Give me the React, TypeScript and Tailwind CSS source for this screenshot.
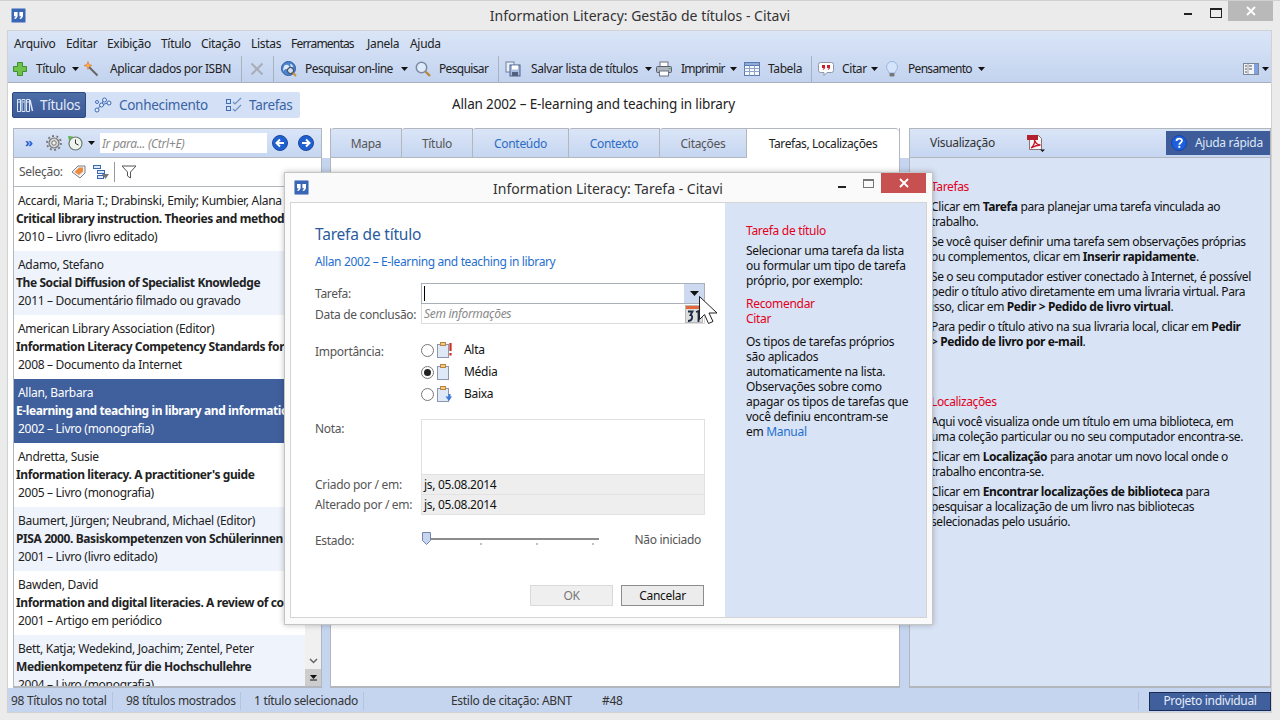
import type { ReactNode } from 'react';

const Caret = ({ className = '' }: { className?: string }) => (
  <svg width="7" height="4" viewBox="0 0 7 4" className={`shrink-0 ${className}`}><path d="M0 0h7L3.5 4z" fill="#111" /></svg>
);

const Logo = () => (
  <svg width="15" height="15" viewBox="0 0 15 15" className="shrink-0">
    <rect x="0.5" y="0.5" width="14" height="14" rx="1" fill="#3a67b5" stroke="#8fa8d4" />
    <path d="M3 4h3.6v3.4C6.6 9.3 5.4 10.6 3.6 11l-.4-1c.9-.3 1.4-.9 1.4-1.8H3zM8.4 4H12v3.4c0 1.9-1.2 3.2-3 3.6l-.4-1c.9-.3 1.4-.9 1.4-1.8H8.4z" fill="#fff" />
  </svg>
);

const Ico = ({ children, w = 16, className = '' }: { children: ReactNode; w?: number; className?: string }) => (
  <svg width={w} height="16" viewBox={`0 0 ${w} 16`} className={`shrink-0 ${className}`}>{children}</svg>
);

const PlusIcon = () => <Ico><path d="M5.5 1.5h5v4h4v5h-4v4h-5v-4h-4v-5h4z" fill="#6cc24a" stroke="#3f8f2a" /></Ico>;
const WandIcon = () => (
  <Ico>
    <path d="M6 6l8.5 8.5" stroke="#666" strokeWidth="2" />
    <path d="M5 0.5l1 3 3 1-3 1-1 3-1-3-3-1 3-1z" fill="#f6b93a" stroke="#e2572b" strokeWidth="0.5" />
  </Ico>
);
const XIcon = () => <Ico><path d="M2.5 2.5l11 11M13.5 2.5l-11 11" stroke="#a9aeb6" strokeWidth="2" /></Ico>;
const GlobeIcon = () => (
  <Ico>
    <circle cx="7.5" cy="7.5" r="7" fill="#4f83cf" stroke="#2e5a9f" />
    <path d="M3 5c2-2 4-1 5 0s-1 3-3 3-2 3-3 1zM9 3c2 0 3 2 3 3l-2 0z" fill="#dbe8f8" />
    <circle cx="9.5" cy="9.5" r="3" fill="#cfe0f5" stroke="#333" />
    <path d="M12 12l3 3" stroke="#c8912e" strokeWidth="2" />
  </Ico>
);
const SearchIcon = () => (
  <Ico>
    <circle cx="6.5" cy="6.5" r="5.2" fill="#dceafa" stroke="#7b8ba0" strokeWidth="1.5" />
    <path d="M10.5 10.5l4.5 4.5" stroke="#b98a3c" strokeWidth="2.4" />
  </Ico>
);
const SaveIcon = () => (
  <Ico>
    <rect x="1" y="1" width="8" height="10" fill="#e8eef8" stroke="#6f7f9c" />
    <rect x="5" y="4" width="10" height="11" fill="#a9bde0" stroke="#4f6189" />
    <rect x="7" y="4.5" width="6" height="4" fill="#fff" />
    <rect x="7" y="11" width="6" height="4" fill="#51607d" />
  </Ico>
);
const PrintIcon = () => (
  <Ico>
    <rect x="4" y="1" width="8" height="5" fill="#fff" stroke="#6c7480" />
    <rect x="0.5" y="5.5" width="15" height="6" rx="1" fill="#aeb6c2" stroke="#59616e" />
    <rect x="3.5" y="10" width="9" height="5" fill="#fff" stroke="#6c7480" />
    <rect x="12.5" y="7" width="2" height="1" fill="#4caf50" />
  </Ico>
);
const TableIcon = () => (
  <Ico>
    <rect x="0.5" y="1.5" width="15" height="13" fill="#f5f8fd" stroke="#5b7bb0" />
    <rect x="0.5" y="1.5" width="15" height="3" fill="#8eaadb" stroke="#5b7bb0" />
    <path d="M5.5 4.5v10M10.5 4.5v10M.5 7.5h15M.5 10.5h15" stroke="#8fa4c8" />
  </Ico>
);
const QuoteIcon = () => (
  <Ico>
    <path d="M2.5 1.5h11a2 2 0 0 1 2 2v6a2 2 0 0 1-2 2H9l-3 3v-3H2.500a2 2 0 0 1-2-2v-6a2 2 0 0 1 2-2z" fill="#fff" stroke="#8d97a8" />
    <path d="M4 4h3v2.500c0 1.200-.8 2-2 2.300l-.3-.8c.6-.2.9-.6.9-1.100H4zM9 4h3v2.500c0 1.200-.8 2-2 2.300l-.3-.8c.6-.2.9-.6.9-1.100H9z" fill="#c8202c" />
  </Ico>
);
const BulbIcon = () => (
  <Ico w={12}>
    <path d="M6 .5a5.500 5.500 0 0 1 5.500 5.500c0 2.500-2 3.500-2.500 6h-6C2.500 9.500.5 8.500.5 6A5.500 5.500 0 0 1 6 .5z" fill="#d4e4fa" stroke="#9db6dc" />
    <rect x="3.500" y="12" width="5" height="3.500" rx="1" fill="#777" />
  </Ico>
);
const ViewIcon = () => (
  <Ico>
    <rect x="0.500" y="2.500" width="15" height="11" fill="#f2f4f8" stroke="#7e8796" />
    <rect x="11" y="3" width="4" height="10" fill="#7fa2dd" />
    <path d="M2 5h2M2 8h2M2 11h2M6 5h3M6 8h3" stroke="#555" />
    <path d="M5 3v10" stroke="#9aa2ae" />
  </Ico>
);
const BooksIcon = () => (
  <Ico w={18}>
    <path d="M1.500 2.500h3v12h-3zM6 2.500h3v12H6zM10.500 2.500h3v12h-3z" fill="none" stroke="#dbe6f8" />
    <path d="M2 5h2M6.500 5h2M11 5h2" stroke="#dbe6f8" />
    <path d="M14 3l2.500 11" stroke="#dbe6f8" strokeWidth="1.500" />
  </Ico>
);
const NodesIcon = () => (
  <Ico w={18}>
    <path d="M3 13l4-5 3-5M7 8l7-2" stroke="#3f6cb5" fill="none" />
    <g fill="#e6eefb" stroke="#3f6cb5"><circle cx="3" cy="13" r="2" /><circle cx="7.500" cy="8" r="2" /><circle cx="10.500" cy="3" r="2" /><circle cx="15" cy="6" r="2" /><circle cx="3" cy="5" r="1.500" /></g>
  </Ico>
);
const TasksIcon = () => (
  <Ico w={18}>
    <g fill="none" stroke="#3f6cb5"><rect x="1.500" y="2.500" width="4" height="4" /><rect x="1.500" y="9.500" width="4" height="4" /></g>
    <path d="M8 5l2 2 6-6M8 12l2 2 6-6" fill="none" stroke="#6f8fc4" strokeWidth="1.200" />
  </Ico>
);
const GearIcon = () => (
  <Ico>
    <circle cx="8" cy="8" r="5" fill="#d6d6d6" stroke="#777" strokeWidth="1.200" />
    <circle cx="8" cy="8" r="7" fill="none" stroke="#777" strokeWidth="1.800" strokeDasharray="2 2.400" />
    <circle cx="8" cy="8" r="2.200" fill="#f4f4f4" stroke="#777" />
  </Ico>
);
const ClockIcon = () => (
  <Ico>
    <circle cx="8.500" cy="8.500" r="6.500" fill="#eef3ee" stroke="#6b7a70" strokeWidth="1.200" />
    <path d="M8.500 4.500v4l3 1.500" fill="none" stroke="#333" />
    <path d="M1 1l5 .5-4 4z" fill="#5db44a" />
  </Ico>
);
const NavBtn = ({ dir }: { dir: 'l' | 'r' }) => (
  <svg width="16" height="16" viewBox="0 0 16 16" className="shrink-0">
    <circle cx="8" cy="8" r="7.500" fill="#1f5fd0" stroke="#1a4a9e" />
    <path d={dir === 'l' ? 'M12 8H5M8 4.500L4.500 8 8 11.500' : 'M4 8h7M8 4.500L11.500 8 8 11.500'} fill="none" stroke="#fff" strokeWidth="2" />
  </svg>
);
const TagIcon = () => (
  <Ico>
    <path d="M1 8l6-6h7v7l-5 5z" fill="#f0f2f6" stroke="#7a7f88" />
    <path d="M3.500 8L8 3.500h4v4L8 11z" fill="#ee8a3c" />
  </Ico>
);
const TreeIcon = () => (
  <Ico>
    <rect x="0.500" y="1.500" width="7" height="3" fill="#dfe9f8" stroke="#3a68ad" />
    <rect x="4.500" y="6.500" width="7" height="3" fill="#dfe9f8" stroke="#3a68ad" />
    <rect x="4.500" y="11.500" width="6" height="3" fill="#dfe9f8" stroke="#3a68ad" />
    <path d="M9 10h7l-3.500 5z" fill="#777" />
  </Ico>
);
const FunnelIcon = () => <Ico><path d="M1 2h14l-5.500 6v6l-3-2V8z" fill="#fff" stroke="#555" /></Ico>;
const PdfIcon = () => (
  <svg width="19" height="19" viewBox="0 0 19 19" className="shrink-0">
    <path d="M3.500 1.500h9l3 3v11h-12z" fill="#f7f7f7" stroke="#8c6f73" />
    <rect x="1" y="1" width="11" height="5" fill="#b22030" />
    <path d="M5 14c3-2 4-6 3.500-8 1 3 3 5 6 5-3 0-6 1-9.500 3z" fill="none" stroke="#c5162a" strokeWidth="1.300" />
    <path d="M14 15.500h5l-2.500 2.500z" fill="#111" />
  </svg>
);
const HelpIcon = () => (
  <svg width="16" height="16" viewBox="0 0 16 16" className="shrink-0">
    <circle cx="8" cy="8" r="7.500" fill="#1d5fdc" stroke="#1747a5" />
    <path d="M5.500 6c0-3.200 5.500-3.200 5.500-.2 0 1.900-2.700 1.900-2.700 3.900" fill="none" stroke="#fff" strokeWidth="1.800" />
    <rect x="7.300" y="10.800" width="2" height="2" fill="#fff" />
  </svg>
);
const NoteIcon = ({ kind }: { kind: 'high' | 'mid' | 'low' }) => (
  <svg width="16" height="16" viewBox="0 0 16 16" className="shrink-0">
    <rect x="0.500" y="2.500" width="11" height="13" fill="#dfe8f7" stroke="#8b97ad" />
    <rect x="3.500" y="0.500" width="5" height="3" fill="#f3c98a" stroke="#b8863e" />
    {kind === 'high' && <path d="M13.500 1v8M13.500 11v2.500" stroke="#d52b1e" strokeWidth="2.200" />}
    {kind === 'low' && <path d="M9.500 9h3V6.500h2V9H16l-3 4.500z" fill="#3b78d8" transform="translate(-1 1.500)" />}
  </svg>
);
const CalendarIcon = () => (
  <svg width="18" height="18" viewBox="0 0 18 18" className="shrink-0">
    <rect x="0.500" y="0.500" width="17" height="17" fill="#dedede" stroke="#b9b9b9" />
    <rect x="1" y="1" width="16" height="3" fill="#e2683c" />
    <path d="M3 6.500h4.500l-2 3.500c2.500 0 2.500 6-2.500 6M11 7l2.500-1v11" fill="none" stroke="#1d2b45" strokeWidth="1.800" />
  </svg>
);

const Sep = () => <div className="w-px h-[26px] bg-[#a8b1bf] shrink-0" />;

function Tool({ icon, label, caret, labelClass, className = '' }: { icon: ReactNode; label: string; caret?: boolean; labelClass: string; className?: string }) {
  return (
    <div className={`flex items-center shrink-0 ${className}`}>
      {icon}
      <span className={`whitespace-nowrap ${labelClass}`}>{label}</span>
      {caret && <Caret className="ml-[5px]" />}
    </div>
  );
}

const menu = [
  ['Arquivo', 'w-[52px]'], ['Editar', 'w-[41px]'], ['Exibição', 'w-[54px]'], ['Título', 'w-[40px]'], ['Citação', 'w-[50px]'],
  ['Listas', 'w-[40px]'], ['Ferramentas', 'w-[76px] tracking-[-0.8px]'], ['Janela', 'w-[43px]'], ['Ajuda', 'w-[36px]'],
];

const rows = [
  ['Accardi, Maria T.; Drabinski, Emily; Kumbier, Alana', 'Critical library instruction. Theories and methods', '2010 – Livro (livro editado)'],
  ['Adamo, Stefano', 'The Social Diffusion of Specialist Knowledge', '2011 – Documentário filmado ou gravado'],
  ['American Library Association (Editor)', 'Information Literacy Competency Standards for', '2008 – Documento da Internet'],
  ['Allan, Barbara', 'E-learning and teaching in library and information', '2002 – Livro (monografia)'],
  ['Andretta, Susie', "Information literacy. A practitioner's guide", '2005 – Livro (monografia)'],
  ['Baumert, Jürgen; Neubrand, Michael (Editor)', 'PISA 2000. Basiskompetenzen von Schülerinnen', '2001 – Livro (livro editado)'],
  ['Bawden, David', 'Information and digital literacies. A review of co', '2001 – Artigo em periódico'],
  ['Bett, Katja; Wedekind, Joachim; Zentel, Peter', 'Medienkompetenz für die Hochschullehre', '2004 – Livro (monografia)'],
];

const rowBg = ['bg-white', 'bg-[#eef3fc]', 'bg-white', 'bg-[#3f5f9d] text-white', 'bg-white', 'bg-[#eef3fc]', 'bg-white', 'bg-[#eef3fc]'];

const tabs = [
  ['Mapa', 'w-[71px] text-[#555]'], ['Título', 'w-[71px] text-[#555]'], ['Conteúdo', 'w-[96px] text-[#2b6cc4]'],
  ['Contexto', 'w-[91px] text-[#2b6cc4]'], ['Citações', 'w-[87px] text-[#555]'],
];

const Red = ({ children }: { children: ReactNode }) => <div className="text-[#e3001b]">{children}</div>;
const P = ({ children }: { children: ReactNode }) => <p className="mt-[5px]">{children}</p>;

const Radio = ({ on, kind, label }: { on?: boolean; kind: 'high' | 'mid' | 'low'; label: string }) => (
  <div className="flex items-center h-[22px]">
    <div className="w-[13px] h-[13px] rounded-full border border-[#777] bg-white flex items-center justify-center shrink-0">
      {on && <div className="w-[7px] h-[7px] rounded-full bg-[#222]" />}
    </div>
    <div className="ml-[3px]"><NoteIcon kind={kind} /></div>
    <span className="ml-[11px] text-[#111]">{label}</span>
  </div>
);

const Label = ({ children }: { children: ReactNode }) => <div className="w-[106px] shrink-0 pt-[1px] text-[#555] whitespace-nowrap">{children}</div>;

function Dialog() {
  return (
    <div className="absolute left-[284px] top-[171px] w-[649px] h-[453px] bg-[#fafafa] border border-[#c4c4c4] shadow-[0_0_6px_rgba(0,0,0,0.25)] flex flex-col">
      <div className="relative h-[29px] shrink-0 flex items-center justify-center">
        <div className="absolute left-[9px] top-[7px]"><Logo /></div>
        <span className="text-[14px] text-[#333] tracking-normal ml-[-1px] mt-[1px]">Information Literacy: Tarefa - Citavi</span>
        <div className="absolute left-[553px] top-[13px] w-[8px] h-[2px] bg-[#222]" />
        <div className="absolute left-[578px] top-[6px] w-[11px] h-[9px] border border-[#777] border-t-2" />
        <div className="absolute left-[596px] top-0 w-[45px] h-[20px] bg-[#c75050] flex items-center justify-center">
          <svg width="10" height="10" viewBox="0 0 10 10"><path d="M1 1l8 8M9 1l-8 8" stroke="#fff" strokeWidth="1.800" /></svg>
        </div>
      </div>
      <div className="mx-[5px] flex-1 border border-[#d4d4d4] bg-white flex min-h-0 mb-[6px]">
        <div className="w-[434px] shrink-0 pl-[24px] pr-[20px] pt-[20px]">
          <div className="text-[15.5px] leading-[22px] text-[#2a5b9e] tracking-[-0.2px]">Tarefa de título</div>
          <div className="mt-[9px] leading-[16px] text-[#1f6fd0] tracking-[-0.37px]">Allan 2002 – E-learning and teaching in library</div>
          <div className="mt-[13px] flex items-center">
            <Label>Tarefa:</Label>
            <div className="flex-1 h-[21px] border border-[#a9b0b9] bg-white flex items-center justify-between">
              <div className="ml-[2px] w-px h-[15px] bg-black" />
              <div className="w-[20px] h-full bg-[#ccd9ef] flex items-center justify-center"><svg width="9" height="5" viewBox="0 0 9 5"><path d="M0 0h9L4.500 5z" fill="#111" /></svg></div>
            </div>
          </div>
          <div className="flex items-center">
            <Label>Data de conclusão:</Label>
            <div className="flex-1 h-[20px] border border-t-0 border-[#dcdcdc] flex items-center justify-between overflow-hidden">
              <span className="ml-[2px] italic text-[#8a8a8a]">Sem informações</span>
              <div className="mr-[1px]"><CalendarIcon /></div>
            </div>
          </div>
          <div className="mt-[15px] flex">
            <div className="pt-[3px]"><Label>Importância:</Label></div>
            <div><Radio kind="high" label="Alta" /><Radio on kind="mid" label="Média" /><Radio kind="low" label="Baixa" /></div>
          </div>
          <div className="mt-[14px] flex">
            <Label>Nota:</Label>
            <div className="flex-1 h-[55px] border border-b-0 border-[#e0e0e0] bg-white" />
          </div>
          <div className="flex items-center">
            <Label>Criado por / em:</Label>
            <div className="flex-1 h-[20px] border border-b-0 border-[#e2e2e2] bg-[#eeeeee] pl-[2px] flex items-center text-[#111]">js, 05.08.2014</div>
          </div>
          <div className="flex items-center">
            <Label>Alterado por / em:</Label>
            <div className="flex-1 h-[21px] border border-[#e2e2e2] bg-[#eeeeee] pl-[2px] flex items-center text-[#111]">js, 05.08.2014</div>
          </div>
          <div className="mt-[15px] flex items-center h-[20px]">
            <Label>Estado:</Label>
            <svg width="178" height="20" viewBox="0 0 178 20" className="shrink-0">
              <rect x="9" y="8" width="169" height="2" fill="#8c8c8c" />
              <path d="M60 13v2M116 13v2M172 13v2" stroke="#6f87b0" />
              <path d="M1.500 2.500h8v8l-4 4-4-4z" fill="#c7d6ee" stroke="#7187ad" />
            </svg>
            <span className="ml-auto mr-[4px] text-[#555]">Não iniciado</span>
          </div>
          <div className="mt-[35px] flex justify-end gap-[8px] pr-[1px]">
            <div className="w-[83px] h-[21px] bg-[#efefef] border border-[#d9d9d9] text-[#777] flex items-center justify-center">OK</div>
            <div className="w-[83px] h-[21px] bg-[#ececec] border border-[#8c8c8c] text-[#111] flex items-center justify-center">Cancelar</div>
          </div>
        </div>
        <div className="flex-1 bg-[#d8e3f5] pl-[21px] pt-[20px] leading-[15px] text-[#111]">
          <Red>Tarefa de título</Red>
          <p className="mt-[5px]">Selecionar uma tarefa da lista<br />ou formular um tipo de tarefa<br />próprio, por exemplo:</p>
          <div className="mt-[8px]"><Red>Recomendar</Red><Red>Citar</Red></div>
          <p className="mt-[8px]">Os tipos de tarefas próprios<br />são aplicados<br />automaticamente na lista.<br />Observações sobre como<br />apagar os tipos de tarefas que<br />você definiu encontram-se<br />em <span className="text-[#1f6fd0]">Manual</span></p>
        </div>
      </div>
    </div>
  );
}

export default function App() {
  return (
    <div className="relative w-[1280px] h-[720px] overflow-hidden bg-[#ebebeb] border-t border-[#d0d0d0] text-[12px] tracking-[-0.3px] text-[#222] font-['Noto_Sans','Open_Sans',sans-serif]">
      {/* title bar */}
      <div className="relative h-[29px] flex items-center justify-center">
        <div className="absolute left-[11px] top-[7px]"><Logo /></div>
        <span className="text-[14px] text-[#333] tracking-normal">Information Literacy: Gestão de títulos - Citavi</span>
        <div className="absolute left-[1184px] top-[12px] w-[8px] h-[2px] bg-[#222]" />
        <div className="absolute left-[1210px] top-[7px] w-[10px] h-[7px] border border-[#222] border-t-2 box-content" />
        <div className="absolute left-[1228px] top-0 w-[45px] h-[20px] bg-[#b9b9b9] flex items-center justify-center">
          <svg width="10" height="10" viewBox="0 0 10 10"><path d="M1 1l8 8M9 1l-8 8" stroke="#fff" strokeWidth="1.800" /></svg>
        </div>
      </div>

      <div className="mx-[7px] w-[1265px] h-[683px] border border-[#d2d2d2] bg-white flex flex-col">
        {/* menu and toolbar */}
        <div className="h-[52px] shrink-0 bg-gradient-to-b from-[#dae5f7] to-[#c3d3ef] border-b border-[#a9b0b9]">
          <div className="h-[24px] flex items-center pl-[6px] pt-[1px]">
            {menu.map(([m, w]) => <div key={m} className={`${w} shrink-0 whitespace-nowrap`}>{m}</div>)}
          </div>
          <div className="h-[27px] flex items-center pl-[4px] tracking-[-0.4px]">
            <Tool icon={<PlusIcon />} label="Título" caret labelClass="ml-[8px] w-[31px]" />
            <Tool icon={<WandIcon />} label="Aplicar dados por ISBN" labelClass="ml-[11px] w-[121px]" className="ml-[4px]" />
            <div className="ml-[10px]"><Sep /></div>
            <div className="ml-[7px]"><XIcon /></div>
            <div className="ml-[8px]"><Sep /></div>
            <Tool icon={<GlobeIcon />} label="Pesquisar on-line" caret labelClass="ml-[8px] w-[91px] tracking-[-0.55px]" className="ml-[7px]" />
            <Tool icon={<SearchIcon />} label="Pesquisar" labelClass="ml-[8px] w-[50px] tracking-[-0.65px]" className="ml-[7px]" />
            <div className="ml-[9px]"><Sep /></div>
            <Tool icon={<SaveIcon />} label="Salvar lista de títulos" caret labelClass="ml-[10px] w-[109px]" className="ml-[6px]" />
            <Tool icon={<PrintIcon />} label="Imprimir" caret labelClass="ml-[9px] w-[44px] tracking-[-0.8px]" className="ml-[4px]" />
            <Tool icon={<TableIcon />} label="Tabela" labelClass="ml-[8px] w-[34px]" className="ml-[7px]" />
            <div className="ml-[9px]"><Sep /></div>
            <Tool icon={<QuoteIcon />} label="Citar" caret labelClass="ml-[8px] w-[24px]" className="ml-[6px]" />
            <Tool icon={<BulbIcon />} label="Pensamento" caret labelClass="ml-[10px] w-[65px] tracking-[-0.7px]" className="ml-[8px]" />
            <div className="ml-auto mr-[2px] flex items-center gap-[3px]"><ViewIcon /><Caret /></div>
          </div>
        </div>

        {/* mode switch and current title */}
        <div className="h-[45px] shrink-0 flex items-start pt-[9px] pl-[4px]">
          <div className="w-[288px] h-[26px] rounded-[2px] bg-[#d3e0f5] flex items-center text-[13.5px] shrink-0">
            <div className="w-[74px] h-full rounded-[2px] bg-gradient-to-b from-[#4e6ea8] to-[#3a5997] border border-[#2f4a80] text-[#e2eafa] flex items-center pl-[3px] gap-[6px]"><BooksIcon /><span>Títulos</span></div>
            <div className="ml-[8px] flex items-center gap-[7px] text-[#3a64a5]"><NodesIcon /><span className="w-[90px] whitespace-nowrap">Conhecimento</span></div>
            <div className="ml-[16px] flex items-center gap-[6px] text-[#3a64a5]"><TasksIcon />Tarefas</div>
          </div>
          <div className="ml-[152px] text-[13.5px] leading-[24px] text-[#222] tracking-[-0.15px] whitespace-nowrap">Allan 2002 – E-learning and teaching in library</div>
        </div>

        {/* panels */}
        <div className="flex-1 min-h-0 flex pl-[5px] bg-white">
          <div className="w-[309px] shrink-0 border border-b-2 border-[#b2b7be] flex flex-col">
            <div className="h-[29px] shrink-0 bg-gradient-to-b from-[#dae5f7] to-[#c6d6f1] border-b border-[#b2b7be] flex items-center">
              <span className="ml-[11px] w-[8px] text-[#1f5fd0] text-[13px] font-bold leading-none mt-[-2px]">»</span>
              <div className="ml-[13px]"><GearIcon /></div>
              <div className="ml-[5px]"><ClockIcon /></div>
              <Caret className="ml-[5px]" />
              <div className="ml-[5px] w-[167px] h-[20px] bg-white flex items-center pl-[2px] pt-[1px] italic text-[#8a8a8a]">Ir para... (Ctrl+E)</div>
              <div className="ml-[5px]"><NavBtn dir="l" /></div>
              <div className="ml-[10px]"><NavBtn dir="r" /></div>
            </div>
            <div className="h-[29px] shrink-0 border-b border-[#b2b7be] flex items-center pl-[5px] bg-white">
              <span className="w-[44px] text-[#555] whitespace-nowrap">Seleção:</span>
              <div className="ml-[8px]"><TagIcon /></div>
              <div className="ml-[6px]"><TreeIcon /></div>
              <div className="ml-[5px] w-px h-[20px] bg-[#999]" />
              <div className="ml-[6px]"><FunnelIcon /></div>
            </div>
            <div className="flex-1 min-h-0 flex bg-white">
              <div className="w-[291px] overflow-hidden">
                {rows.map((r, i) => (
                  <div key={r[0]} className={`h-[64px] pt-[5px] leading-[18px] whitespace-nowrap overflow-hidden ${rowBg[i]}`}>
                    <div className="pl-[4px]">{r[0]}</div>
                    <div className="pl-[2px] font-bold tracking-[-0.4px]">{r[1]}</div>
                    <div className="pl-[4px]">{r[2]}</div>
                  </div>
                ))}
              </div>
              <div className="w-[16px] shrink-0 bg-[#f0f0f0] flex flex-col justify-end">
                <div className="h-[16px] flex items-center justify-center"><svg width="9" height="6" viewBox="0 0 9 6"><path d="M1 1l3.500 3.500L8 1" fill="none" stroke="#666" strokeWidth="1.500" /></svg></div>
                <div className="h-[17px] bg-[#cdcdcd] flex flex-col items-center justify-center gap-[1px]"><svg width="9" height="6" viewBox="0 0 9 6"><path d="M1 0h7L4.500 4z" fill="#111" /><path d="M1 5h7" stroke="#111" /></svg></div>
              </div>
            </div>
          </div>

          <div className="w-[8px] shrink-0 flex flex-col"><div className="h-[30px] bg-white" /><div className="flex-1 bg-[#c5d5f0]" /></div>

          <div className="w-[570px] shrink-0 border-x border-b-2 border-[#b2b7be] flex flex-col bg-white">
            <div className="h-[30px] flex shrink-0">
              {tabs.map(([t, c]) => (
                <div key={t} className={`${c} shrink-0 h-full border-t border-r border-b border-[#b2b7be] rounded-tl-[3px] bg-gradient-to-b from-[#dae5f7] to-[#c6d6f1] flex items-center justify-center pt-[1px]`}>{t}</div>
              ))}
              <div className="flex-1 border-t border-[#b2b7be] rounded-tr-[4px] bg-white flex items-center justify-center text-[#222] tracking-[-0.4px]">Tarefas, Localizações</div>
            </div>
          </div>

          <div className="w-[9px] shrink-0 flex flex-col"><div className="h-[30px] bg-white" /><div className="flex-1 bg-[#c5d5f0]" /></div>

          <div className="w-[362px] shrink-0 border border-b-2 border-[#b2b7be] flex flex-col bg-[#d8e3f5]">
            <div className="h-[29px] shrink-0 bg-gradient-to-b from-[#dae5f7] to-[#c6d6f1] border-b border-[#b2b7be] flex items-center">
              <span className="ml-[20px] text-[#333]">Visualização</span>
              <div className="ml-[31px] mt-[1px]"><PdfIcon /></div>
              <div className="ml-auto w-[104px] h-[24px] bg-[#3d5c99] flex items-center pl-[5px] gap-[8px] text-[#dfe7f7]"><HelpIcon />Ajuda rápida</div>
            </div>
            <div className="flex-1 pl-[21px] pt-[21px] leading-[15px] text-[#111] tracking-[-0.38px]">
              <Red>Tarefas</Red>
              <P>Clicar em <b>Tarefa</b> para planejar uma tarefa vinculada ao<br />trabalho.</P>
              <P>Se você quiser definir uma tarefa sem observações próprias<br />ou complementos, clicar em <b>Inserir rapidamente</b>.</P>
              <P>Se o seu computador estiver conectado à Internet, é possível<br />pedir o título ativo diretamente em uma livraria virtual. Para<br />isso, clicar em <b>Pedir &gt; Pedido de livro virtual</b>.</P>
              <P>Para pedir o título ativo na sua livraria local, clicar em <b>Pedir</b><br /><b>&gt; Pedido de livro por e-mail</b>.</P>
              <div className="mt-[45px]"><Red>Localizações</Red></div>
              <P>Aqui você visualiza onde um título em uma biblioteca, em<br />uma coleção particular ou no seu computador encontra-se.</P>
              <P>Clicar em <b>Localização</b> para anotar um novo local onde o<br />trabalho encontra-se.</P>
              <P>Clicar em <b>Encontrar localizações de biblioteca</b> para<br />pesquisar a localização de um livro nas bibliotecas<br />selecionadas pelo usuário.</P>
            </div>
          </div>
        </div>

        {/* status bar */}
        <div className="h-[24px] shrink-0 bg-[#c5d5f0] flex items-center text-[#333] pt-[2px]">
          <div className="w-[105px] pl-[3px] border-r border-[#b5c4de] h-[18px] flex items-center whitespace-nowrap">98 Títulos no total</div>
          <div className="w-[128px] pl-[13px] border-r border-[#b5c4de] h-[18px] flex items-center whitespace-nowrap">98 títulos mostrados</div>
          <div className="w-[123px] pl-[13px] border-r border-[#b5c4de] h-[18px] flex items-center whitespace-nowrap">1 título selecionado</div>
          <div className="w-[238px] pl-[87px] whitespace-nowrap">Estilo de citação: ABNT</div>
          <div>#48</div>
          <div className="ml-auto w-px h-[18px] bg-[#b5c4de]" />
          <div className="ml-[10px] w-[122px] h-[19px] bg-[#3f5f9d] border border-[#1b2a52] text-[#e6edfa] flex items-center justify-center">Projeto individual</div>
        </div>
      </div>

      <Dialog />

      {/* mouse pointer */}
      <svg width="20" height="30" viewBox="0 0 20 30" className="absolute left-[699px] top-[295px]">
        <path d="M.5.5v23l5-5 4 9 4.500-2-4-8.500H18z" fill="#fff" stroke="#222" strokeWidth="1" />
      </svg>
    </div>
  );
}
